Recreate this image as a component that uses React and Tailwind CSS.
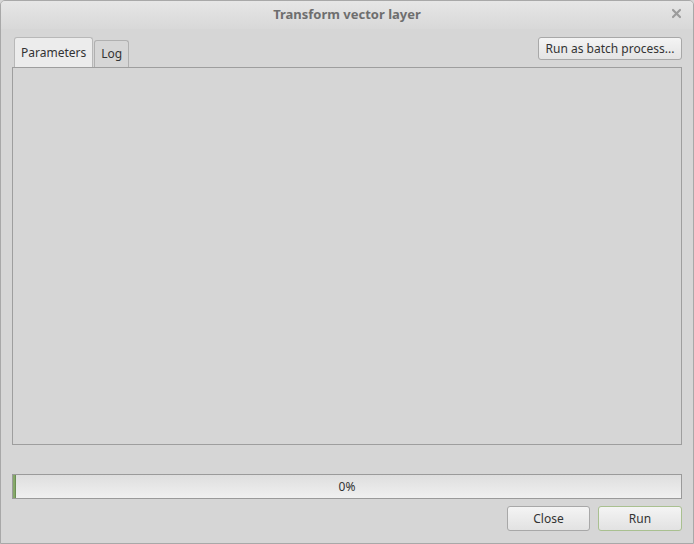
export default function App() {
  const font = { fontFamily: '"Noto Sans", "DejaVu Sans", sans-serif' };
  return (
    <div className="w-[694px] h-[544px] bg-[#d6d6d6] text-[12px] text-[#3c3c3c]" style={font}>
      <div className="w-full h-full flex flex-col border border-[#a8a8a8] rounded-t-[5px] overflow-hidden">
        <div className="h-[28px] shrink-0 flex items-center justify-center relative bg-gradient-to-b from-[#e6e6e6] to-[#d8d8d8]">
          <span className="font-bold text-[13px] text-[#6e6e6e]">Transform vector layer</span>
          <svg className="absolute left-[670px] top-[7px]" width="11" height="11" viewBox="0 0 11 11">
            <path d="M2 2 L9 9 M9 2 L2 9" stroke="#9c9c9c" strokeWidth="2.2" strokeLinecap="round" />
          </svg>
        </div>
        <div className="flex-1 flex flex-col px-[11px]">
          <div className="flex items-end justify-between h-[38px] pt-[8px]">
            <div className="flex items-end pl-[2px] gap-[1px]">
              <div className="h-[30px] px-[6px] flex items-center border border-b-0 border-[#b8b8b8] rounded-t-[3px] bg-[#ececec] text-[#333]">Parameters</div>
              <div className="h-[27px] w-[35px] flex items-center justify-center border border-b-0 border-[#b0b0b0] rounded-t-[3px] bg-[#d6d6d6] text-[#333]">Log</div>
            </div>
            <div className="self-start h-[23px] w-[144px] flex items-center justify-center border border-[#a8a8a8] rounded-[3px] bg-gradient-to-b from-[#f4f4f4] to-[#e4e4e4] text-[#333]">Run as batch process...</div>
          </div>
          <div className="h-[378px] border border-[#9e9e9e] bg-[#d6d6d6]" />
          <div className="h-[29px]" />
          <div className="h-[25px] relative border border-[#9a9a9a] bg-gradient-to-b from-[#dedede] to-[#f0f0f0] flex items-center justify-center text-[#333]">
            <div className="absolute left-0 top-0 bottom-0 w-[3px] bg-[#86a86a] border-r border-[#6b8f52]" />
            0%
          </div>
          <div className="flex justify-end gap-[8px] mt-[7px]">
            <div className="w-[83px] h-[25px] flex items-center justify-center border border-[#a8a8a8] rounded-[3px] bg-gradient-to-b from-[#f4f4f4] to-[#e2e2e2] text-[#333]">Close</div>
            <div className="w-[84px] h-[25px] flex items-center justify-center border border-[#a9c090] rounded-[3px] bg-gradient-to-b from-[#f4f4f4] to-[#e2e2e2] text-[#333]">Run</div>
          </div>
        </div>
      </div>
    </div>
  );
}
